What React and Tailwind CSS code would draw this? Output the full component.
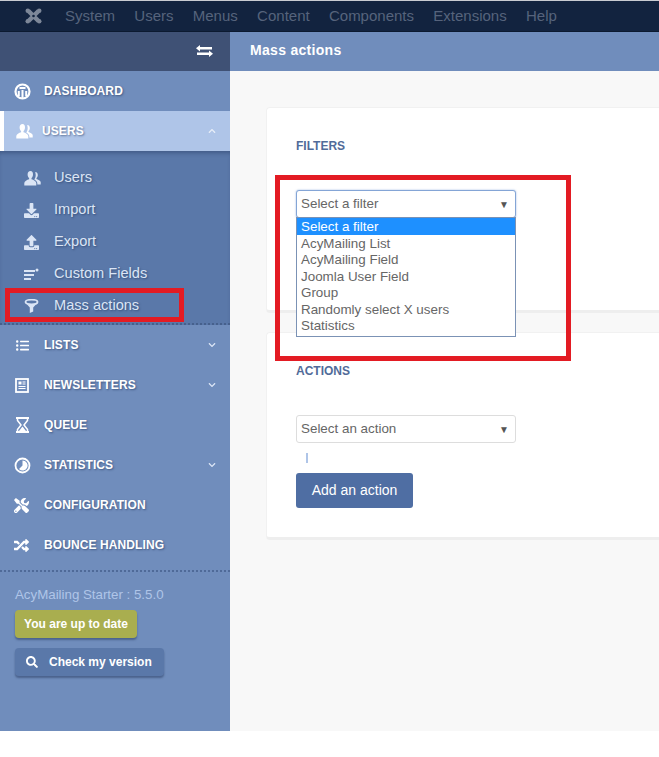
import React from "react";
import { FaChevronDown, FaChevronUp, FaSearch, FaDownload, FaUpload, FaListUl, FaTools, FaRandom } from "react-icons/fa";

const Joomla = () => (
  <svg width="17" height="16" viewBox="0 0 17 16" fill="none" stroke="#7d8798">
    <path d="M3.500 3l10 10M13.500 3l-10 10" strokeWidth="4.500" />
    <circle cx="2.800" cy="2.800" r="2.300" fill="#7d8798" stroke="none" />
    <circle cx="14.200" cy="2.800" r="2.300" fill="#7d8798" stroke="none" />
    <circle cx="2.800" cy="13.200" r="2.300" fill="#7d8798" stroke="none" />
    <circle cx="14.200" cy="13.200" r="2.300" fill="#7d8798" stroke="none" />
    <circle cx="8.500" cy="8" r="1.300" fill="#12233f" stroke="none" />
  </svg>
);

const Swap = () => (
  <svg width="17" height="12" viewBox="0 0 17 12" fill="white">
    <path d="M4 0v2h12v2.500H4v2L0 3.200zM13 5.500v2H1V10h12v2l4-3.300z" />
  </svg>
);

const Gauge = () => (
  <svg width="17" height="17" viewBox="0 0 17 17" fill="none" stroke="white">
    <circle cx="8.500" cy="8.500" r="7" strokeWidth="2.200" />
    <path d="M8.500 7v8M4.800 8v5M12.200 8v5M5.500 5h6" strokeWidth="2" />
  </svg>
);

const People = ({ size = 17, color = "currentColor" }) => (
  <svg width={size} height={size} viewBox="0 0 17 17" fill={color}>
    <path d="M6.500 1C4.700 1 3.600 2.500 3.600 4.500c0 1.500.6 2.800 1.500 3.600v1.200C3 10 .5 11.200 .3 13v2.500h12V13c-.2-1.800-2.700-3-4.800-3.700V8.100c.9-.8 1.500-2.100 1.500-3.600C9 2.500 8.300 1 6.500 1z" />
    <path d="M11.300 2c1.500 0 2.500 1.300 2.500 3 0 1.300-.5 2.400-1.300 3v1c1.500.5 3.900 1.500 4.200 3v2.500h-3.400V13c-.2-1.500-1.500-2.800-3-3.600.9-1 1.400-2.700 1.400-4.300 0-1-.2-2-.7-2.800.2-.2.5-.3.800-.3z" />
  </svg>
);

const CustomFields = () => (
  <svg width="15" height="13" viewBox="0 0 15 13" fill="#dbe5f5">
    <rect x="0" y="2" width="11" height="2" />
    <rect x="0" y="6" width="10" height="2" />
    <rect x="0" y="10" width="7" height="2" />
    <circle cx="13" cy="2" r="1.500" />
  </svg>
);

const Funnel = () => (
  <svg width="15" height="15" viewBox="0 0 15 15">
    <ellipse cx="7.500" cy="3" rx="6" ry="2.300" fill="none" stroke="#dbe5f5" strokeWidth="1.800" />
    <path d="M1.800 4l4 4.500V14l3.400-1.500v-4L13.200 4c-1.500 1.300-3.500 1.800-5.700 1.800S3.300 5.300 1.800 4z" fill="#dbe5f5" />
  </svg>
);

const PieIcon = () => (
  <svg width="17" height="17" viewBox="0 0 17 17" fill="none" stroke="white">
    <circle cx="8.500" cy="8.500" r="7" strokeWidth="1.800" />
    <path d="M8.500 8.500V3.500a5 5 0 1 1-3.500 8.500z" fill="white" stroke="none" />
  </svg>
);

const News = () => (
  <svg width="14" height="15" viewBox="0 0 14 15" fill="none" stroke="white">
    <rect x="1" y="1" width="12" height="13" strokeWidth="1.800" />
    <rect x="3.500" y="3.500" width="3" height="3" fill="white" stroke="none" />
    <path d="M7.500 4h3M7.500 6h3M3.500 8.500h7M3.500 10.500h7" strokeWidth="1.100" />
  </svg>
);

const Hourglass = () => (
  <svg width="15" height="16" viewBox="0 0 15 16" fill="none" stroke="white">
    <path d="M1 1h13M1 15h13" strokeWidth="2" />
    <path d="M2.500 1v2.500L6 8l-3.500 4.500V15M12.500 1v2.500L9 8l3.500 4.500V15" strokeWidth="1.500" />
    <path d="M7.500 9.500l3.500 4.500H4z" fill="white" stroke="none" />
  </svg>
);

const main = [
  { label: "LISTS", icon: <FaListUl size={13} />, arrow: true, pad: "pl-[16px]" },
  { label: "NEWSLETTERS", icon: <News />, arrow: true, pad: "pl-[15px]" },
  { label: "QUEUE", icon: <Hourglass />, pad: "pl-[15px]" },
  { label: "STATISTICS", icon: <PieIcon />, arrow: true, pad: "pl-[14px]" },
  { label: "CONFIGURATION", icon: <FaTools size={15} />, pad: "pl-[14px]" },
  { label: "BOUNCE HANDLING", icon: <FaRandom size={15} />, pad: "pl-[14px]" },
];

const sub = [
  { label: "Users", icon: <People size={17} /> },
  { label: "Import", icon: <FaDownload size={15} /> },
  { label: "Export", icon: <FaUpload size={15} /> },
  { label: "Custom Fields", icon: <CustomFields /> },
  { label: "Mass actions", icon: <Funnel /> },
];

const shadow = "[text-shadow:1px_1px_2px_rgba(30,50,90,0.55)]";

const Row = ({ icon, label, arrow, pad = "pl-[14px]" }) => (
  <div className={`h-10 flex items-center text-white text-[12px] font-bold tracking-[0.1px] ${shadow}`}>
    <span className={`w-[44px] ${pad} flex items-center text-white shrink-0`}>{icon}</span>
    <span className="flex-1">{label}</span>
    {arrow && <FaChevronDown size={8} className="mr-[14px] text-[#dbe5f5]" />}
  </div>
);

const options = ["AcyMailing List", "AcyMailing Field", "Joomla User Field", "Group", "Randomly select X users", "Statistics"];

const Select = ({ label, focus }) => (
  <div className={`w-[220px] h-[28px] rounded-[3px] bg-white border flex items-center pl-[4px] pr-[6px] pt-px text-[13.4px] text-[#666] ${focus ? "border-[#84a5d6] shadow-[0_0_2px_rgba(110,150,210,0.7)]" : "border-[#ddd]"}`}>
    <span className="flex-1">{label}</span>
    <span className="text-[10px] text-[#555]">▼</span>
  </div>
);

export default function App() {
  return (
    <div className="relative w-[659px] h-[757px] overflow-hidden bg-white font-['Liberation_Sans',Arial,sans-serif]">
      <div className="h-px bg-[#c9ccd2]" />
      <nav className="h-[31px] bg-[#12233f] flex items-center text-[15px] text-[#56637c] border-b border-[#0c1a30]">
        <span className="ml-[25px] w-[40px]"><Joomla /></span>
        <div className="flex gap-[19.300px]">
          {["System", "Users", "Menus", "Content", "Components", "Extensions", "Help"].map((m) => (
            <span key={m}>{m}</span>
          ))}
        </div>
      </nav>
      <div className="flex h-[699px]">
        <aside className="w-[230px] shrink-0 bg-[#708dbc] flex flex-col">
          <div className="h-[39px] bg-[#3f5175] flex items-center justify-end pr-[17px] pb-[2px]"><Swap /></div>
          <Row icon={<Gauge />} label="DASHBOARD" />
          <div className={`h-10 flex items-center bg-[#afc5e8] border-l-4 border-white text-white text-[12px] font-bold tracking-[0.1px] ${shadow}`}>
            <span className="w-[38px] pl-[12px] flex items-center"><People size={17} /></span>
            <span className="flex-1">USERS</span>
            <FaChevronUp size={8} className="mr-[14px] text-[#e8eef8]" />
          </div>
          <div className="bg-[#5a78a9] pt-[11px] h-[174px] border-b-2 border-dotted border-[#46608c] shadow-[inset_0_4px_4px_-2px_rgba(40,60,100,0.5)]">
            {sub.map((s) => (
              <div key={s.label} className={`h-8 flex items-center text-[14.6px] text-[#dbe5f5] ${shadow}`}>
                <span className="w-[54px] pl-[24px] flex items-center shrink-0">{s.icon}</span>
                <span>{s.label}</span>
              </div>
            ))}
          </div>
          {main.map((m) => <Row key={m.label} {...m} />)}
          <div className="mt-[5px] border-t-2 border-dotted border-[#4f6a98] pl-[15px] pt-[14px]">
            <div className="text-[13.3px] leading-[18px] text-[#afc5e8]">AcyMailing Starter : 5.5.0</div>
            <div className="mt-[6px] w-[122px] h-[28px] rounded-[4px] bg-[#a9ae4f] flex items-center justify-center text-[12px] font-bold text-white shadow-[0_2px_2px_rgba(50,70,110,0.6)]">You are up to date</div>
            <div className="mt-[10px] w-[149px] h-[28px] rounded-[4px] bg-[#5a78a9] flex items-center pl-[11px] gap-[11px] text-[12px] font-bold text-white shadow-[0_2px_2px_rgba(50,70,110,0.6)]">
              <FaSearch size={12} />
              <span>Check my version</span>
            </div>
          </div>
        </aside>
        <main className="flex-1 min-w-0 bg-[#f8f8f8] flex flex-col">
          <div className="h-[39px] bg-[#708dbc] flex items-center pl-[20px] pb-[2px] text-[14px] font-bold text-white tracking-[0.3px]">Mass actions</div>
          <div className="pl-[36px] pt-[36px] flex flex-col gap-[19px]">
            <section className="h-[206px] bg-white rounded-l-[4px] border-l border-t border-[#f1f1f1] border-b-[3px] border-b-[#eeeeee] pl-[29px] pt-[31px]">
              <h3 className="text-[12px] leading-[14px] font-bold text-[#516b99]">FILTERS</h3>
              <div className="mt-[37px]"><Select label="Select a filter" focus /></div>
            </section>
            <section className="h-[208px] bg-white rounded-l-[4px] border-l border-t border-[#f1f1f1] border-b-[3px] border-b-[#eeeeee] pl-[29px] pt-[31px]">
              <h3 className="text-[12px] leading-[14px] font-bold text-[#516b99]">ACTIONS</h3>
              <div className="mt-[37px]"><Select label="Select an action" /></div>
              <div className="ml-[10px] mt-[10px] w-[2px] h-[10px] bg-[#afc5e8]" />
              <div className="mt-[10px] w-[117px] h-[35px] rounded-[3px] bg-[#4f6ea3] flex items-center justify-center text-[14px] text-white">Add an action</div>
            </section>
          </div>
        </main>
      </div>

      {/* open select list */}
      <div className="absolute left-[296px] top-[217px] w-[220px] h-[120px] bg-white border border-[#7b92b5] text-[13.4px] text-[#666] leading-[16.500px]">
        <div className="bg-[#1e90ff] text-white font-medium pl-[4px] h-[17px] leading-[17px]">Select a filter</div>
        <div className="pt-[0.500px]">
          {options.map((o) => <div key={o} className="pl-[4px]">{o}</div>)}
        </div>
      </div>

      {/* red annotation boxes */}
      <div className="absolute left-[275px] top-[175px] w-[296px] h-[186px] border-[5px] border-[#e31b23]" />
      <div className="absolute left-[5px] top-[288px] w-[179px] h-[34px] border-[5px] border-[#e31b23]" />
    </div>
  );
}
